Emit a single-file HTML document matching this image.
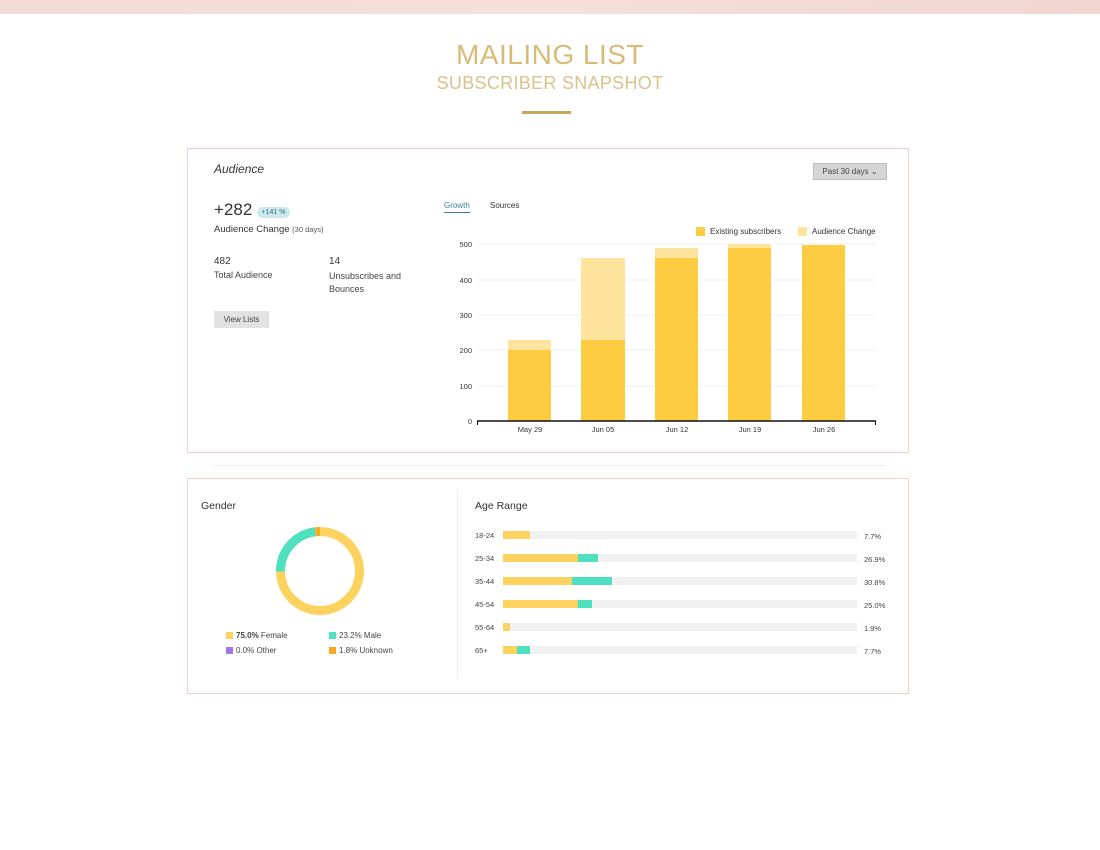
<!DOCTYPE html>
<html><head><meta charset="utf-8"><style>
*{margin:0;padding:0;box-sizing:border-box}
body{width:1100px;height:850px;background:#fff;font-family:"Liberation Sans",sans-serif;position:relative;overflow:hidden;color:#333}
.a{position:absolute}
.top{left:0;top:0;width:1100px;height:14px;background:linear-gradient(90deg,#f3dcd6,#f5e0da,#f1d6d0)}
.t1{left:0;width:1100px;text-align:center;top:39px;font-size:28px;color:#d8bb78;font-weight:300;letter-spacing:.5px}
.t2{left:0;width:1100px;text-align:center;top:73px;font-size:18px;color:#dcc189;letter-spacing:.3px}
.card{border:1px solid #f2cfcb;background:#fff}
.s{font-size:9px;color:#444}
</style></head><body>
<div class="a top"></div>
<div class="a t1">MAILING LIST</div>
<div class="a t2">SUBSCRIBER SNAPSHOT</div>
<div class="a" style="left:522px;top:111px;width:49px;height:3px;background:#c9a55a"></div>

<div class="a card" style="left:187px;top:148px;width:722px;height:305px"></div>
<div class="a" style="left:214px;top:162px;font-size:12px;font-style:italic;color:#333">Audience</div>
<div class="a" style="left:813px;top:163px;width:74px;height:17px;background:#d6d6d6;border:1px solid #bdbdbd;font-size:8px;color:#444;line-height:15px;text-align:center">Past 30 days &#8964;</div>
<div class="a" style="left:214px;top:200px;font-size:17px;color:#333">+282</div>
<div class="a" style="left:257px;top:207px;width:33px;height:11px;border-radius:6px;background:#cde9ef;font-size:7px;line-height:11px;text-align:center;color:#2a6a7a">+141 %</div>
<div class="a" style="left:214px;top:224px;font-size:9.5px;color:#333">Audience Change <span style="font-size:7.5px;color:#555">(30 days)</span></div>
<div class="a" style="left:214px;top:256px;font-size:10px">482</div>
<div class="a s" style="left:214px;top:270px">Total Audience</div>
<div class="a" style="left:329px;top:256px;font-size:10px">14</div>
<div class="a s" style="left:329px;top:270px;line-height:13px">Unsubscribes and<br>Bounces</div>
<div class="a" style="left:214px;top:311px;width:55px;height:17px;background:#e2e2e2;font-size:8px;line-height:17px;text-align:center;color:#444">View Lists</div>
<div class="a" style="left:444px;top:201px;font-size:8px;color:#3a7f95">Growth</div>
<div class="a" style="left:444px;top:212px;width:26px;height:1px;background:#3a7f95"></div>
<div class="a" style="left:490px;top:201px;font-size:8px;color:#333">Sources</div>
<div class="a" style="left:696px;top:227px;width:9px;height:9px;background:#fecc40"></div>
<div class="a" style="left:710px;top:227px;font-size:8px;color:#333">Existing subscribers</div>
<div class="a" style="left:798px;top:227px;width:9px;height:9px;background:#fee49c"></div>
<div class="a" style="left:812px;top:227px;font-size:8px;color:#333">Audience Change</div>
<svg class="a" style="left:440px;top:235px" width="450" height="205">
<g stroke="#f0f0f0" stroke-width="1"><line x1="37" x2="436" y1="9" y2="9"/><line x1="37" x2="436" y1="45" y2="45"/><line x1="37" x2="436" y1="80" y2="80"/><line x1="37" x2="436" y1="115" y2="115"/><line x1="37" x2="436" y1="151" y2="151"/></g>
<g font-size="7.5" fill="#333" text-anchor="end" font-family="Liberation Sans"><text x="32" y="12">500</text><text x="32" y="48">400</text><text x="32" y="83">300</text><text x="32" y="118">200</text><text x="32" y="154">100</text><text x="32" y="189">0</text></g>
<g fill="#fee49c"><rect x="68" y="105" width="43" height="10"/><rect x="141" y="23" width="44" height="82"/><rect x="215" y="13" width="43" height="10"/><rect x="288" y="9" width="43" height="4"/></g>
<g fill="#fecc40"><rect x="68" y="115" width="43" height="71"/><rect x="141" y="105" width="44" height="81"/><rect x="215" y="23" width="43" height="163"/><rect x="288" y="13" width="43" height="173"/><rect x="362" y="10" width="43" height="176"/></g>
<line x1="37" x2="436" y1="186" y2="186" stroke="#111" stroke-width="1.5"/>
<line x1="37.5" x2="37.5" y1="186" y2="190" stroke="#111"/><line x1="435.5" x2="435.5" y1="186" y2="190" stroke="#111"/>
<g font-size="7.5" fill="#333" text-anchor="middle" font-family="Liberation Sans"><text x="90" y="197">May 29</text><text x="163" y="197">Jun 05</text><text x="237" y="197">Jun 12</text><text x="310" y="197">Jun 19</text><text x="384" y="197">Jun 26</text></g>
</svg>

<div class="a" style="left:214px;top:465px;width:672px;height:1px;background:#eee"></div>

<div class="a card" style="left:187px;top:478px;width:722px;height:216px"></div>
<div class="a" style="left:457px;top:490px;width:1px;height:188px;background:#eee"></div>
<div class="a" style="left:201px;top:500px;font-size:10.5px;color:#333">Gender</div>
<svg class="a" style="left:270px;top:521px" width="100" height="100">
<circle cx="50" cy="50" r="39.5" fill="none" stroke="#fed25e" stroke-width="9"/>
<circle cx="50" cy="50" r="39.5" fill="none" stroke="#4ee0bf" stroke-width="9" stroke-dasharray="57.6 300" transform="rotate(-180.7 50 50)" />
<circle cx="50" cy="50" r="39.5" fill="none" stroke="#f6a821" stroke-width="9" stroke-dasharray="4.5 300" transform="rotate(-96.5 50 50)" />
</svg>
<div class="a" style="left:226px;top:632px;width:7px;height:7px;background:#fed25e"></div>
<div class="a s" style="left:236px;top:631px;font-size:8px"><b style="font-weight:600">75.0%</b> Female</div>
<div class="a" style="left:329px;top:632px;width:7px;height:7px;background:#4ee0bf"></div>
<div class="a s" style="left:339px;top:631px;font-size:8px">23.2% Male</div>
<div class="a" style="left:226px;top:647px;width:7px;height:7px;background:#a178e0"></div>
<div class="a s" style="left:236px;top:646px;font-size:8px">0.0% Other</div>
<div class="a" style="left:329px;top:647px;width:7px;height:7px;background:#f6a821"></div>
<div class="a s" style="left:339px;top:646px;font-size:8px">1.8% Unknown</div>

<div class="a" style="left:475px;top:500px;font-size:10.5px;color:#333">Age Range</div>
<svg class="a" style="left:470px;top:525px" width="420" height="140" font-family="Liberation Sans" font-size="7.5" fill="#444">
<g><text x="5" y="13">18-24</text><text x="5" y="36">25-34</text><text x="5" y="59">35-44</text><text x="5" y="82">45-54</text><text x="5" y="105">55-64</text><text x="5" y="128">65+</text></g>
<g fill="#f1f1f1"><rect x="33" y="6" width="354" height="8"/><rect x="33" y="29" width="354" height="8"/><rect x="33" y="52" width="354" height="8"/><rect x="33" y="75" width="354" height="8"/><rect x="33" y="98" width="354" height="8"/><rect x="33" y="121" width="354" height="8"/></g>
<g fill="#4ee0bf"><rect x="108" y="29" width="20" height="8"/><rect x="102" y="52" width="40" height="8"/><rect x="108" y="75" width="14" height="8"/><rect x="47" y="121" width="13" height="8"/></g>
<g fill="#fed25e"><rect x="33" y="6" width="27" height="8"/><rect x="33" y="29" width="75" height="8"/><rect x="33" y="52" width="69" height="8"/><rect x="33" y="75" width="75" height="8"/><rect x="33" y="98" width="7" height="8"/><rect x="33" y="121" width="14" height="8"/></g>
<g><text x="394" y="14">7.7%</text><text x="394" y="37">26.9%</text><text x="394" y="60">30.8%</text><text x="394" y="83">25.0%</text><text x="394" y="106">1.9%</text><text x="394" y="129">7.7%</text></g>
</svg>
</body></html>
